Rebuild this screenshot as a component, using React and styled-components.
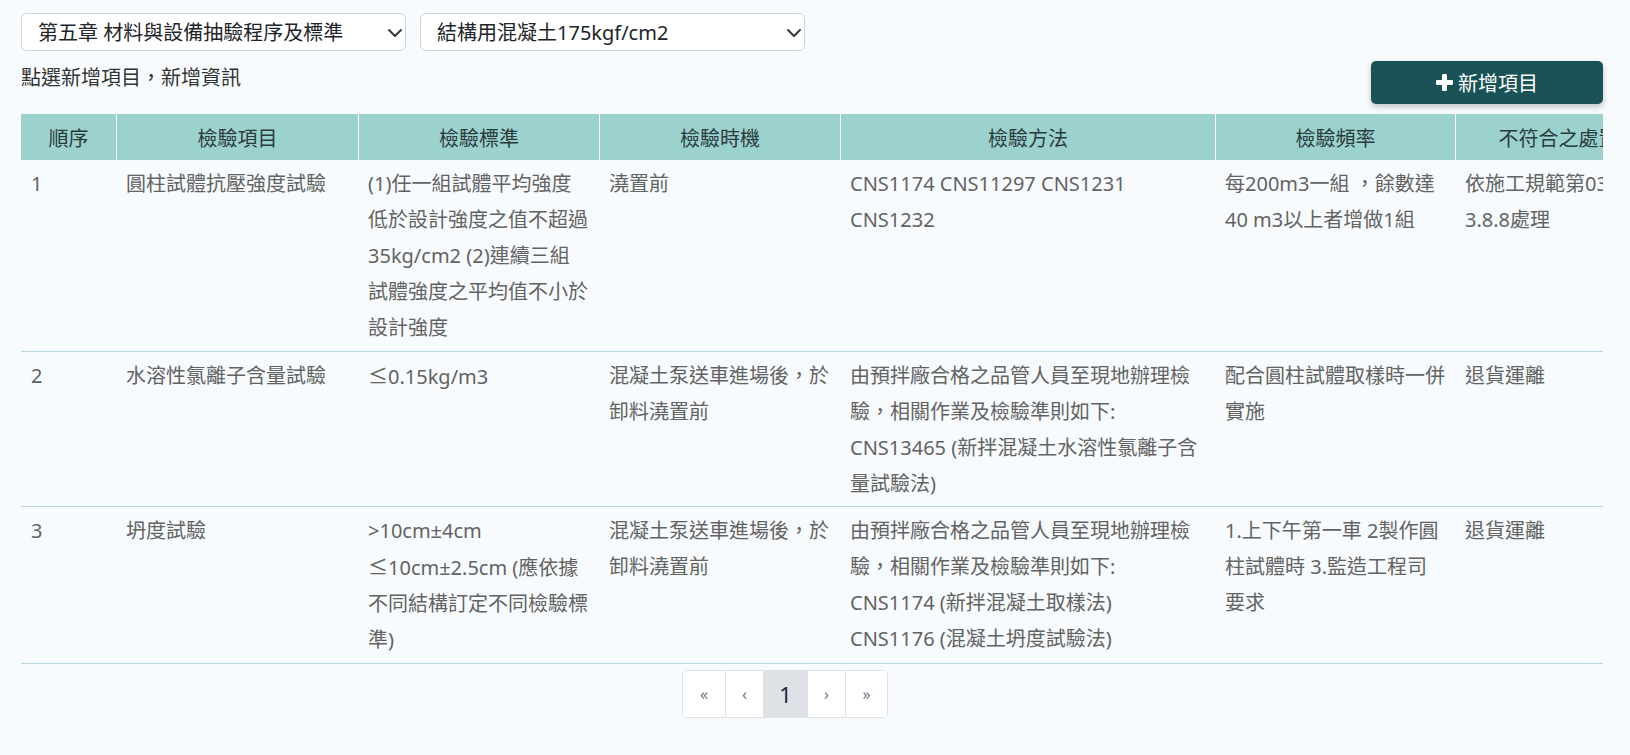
import React from 'react';
import styled, { createGlobalStyle } from 'styled-components';

const GlobalStyle = createGlobalStyle`
  * { box-sizing: border-box; }
  html, body { margin: 0; padding: 0; background: #f7fbfd; }
  body {
    font-family: "Noto Sans", "Noto Sans CJK TC", sans-serif;
  }
`;

const Page = styled.div`
  min-height: 755px;
  padding: 13px 27px 20px 21px;
  background: #f7fbfd;
  color: #333;
  font-size: 20px;
`;

const FilterRow = styled.div`
  display: flex;
  gap: 14px;
`;

const SelectWrap = styled.div`
  position: relative;
  width: 385px;
  height: 38px;
`;

const Select = styled.select`
  appearance: none;
  width: 100%;
  height: 100%;
  padding: 0 40px 0 16px;
  background: #fff;
  border: 1px solid #ced4da;
  border-radius: 6px;
  color: #212529;
  font-family: inherit;
  font-size: 20px;
  outline: none;
`;

const Chevron = styled.svg`
  position: absolute;
  right: 3px;
  top: 14px;
  width: 16px;
  height: 12px;
  pointer-events: none;
`;

const ActionRow = styled.div`
  display: flex;
  justify-content: space-between;
  align-items: flex-start;
  margin-top: 10px;
`;

const InfoText = styled.div`
  padding-top: 2px;
  line-height: 30px;
  color: #333;
`;

const AddButton = styled.button`
  display: flex;
  align-items: center;
  justify-content: center;
  gap: 5px;
  width: 232px;
  height: 43px;
  border: none;
  border-radius: 5px;
  background: #1a5357;
  color: #fff;
  font-family: inherit;
  font-size: 20px;
  box-shadow: 0 3px 6px rgba(0, 0, 0, 0.22);
  cursor: pointer;
`;

const TableWrap = styled.div`
  margin-top: 10px;
  overflow: hidden;
`;

const Table = styled.table`
  table-layout: fixed;
  width: 1640px;
  border-collapse: separate;
  border-spacing: 0;
`;

const Th = styled.th`
  height: 46px;
  padding: 0 6px;
  background: #9bd2ce;
  color: #2b3b3d;
  font-weight: normal;
  font-size: 20px;
  text-align: center;
  white-space: nowrap;
  border-left: ${p => (p.$first ? 'none' : '1px solid #fff')};
`;

const Td = styled.td`
  vertical-align: top;
  padding: 6px 4px 4.5px 10px;
  line-height: 36px;
  color: #636363;
  font-size: 20px;
  white-space: pre;
  overflow: hidden;
  border-bottom: 1px solid #b6d5de;
`;

const Sym = styled.span`
  font-family: "Noto Sans CJK TC", sans-serif;
`;

const PagerRow = styled.div`
  display: flex;
  justify-content: center;
  padding-right: 54px;
  margin-top: 6px;
`;

const Pager = styled.nav`
  display: flex;
  height: 48px;
  background: #fff;
  border: 1px solid #dee2e6;
  border-radius: 5px;
  overflow: hidden;
`;

const PageItem = styled.span`
  display: flex;
  align-items: center;
  justify-content: center;
  width: ${p => p.$w}px;
  border-left: ${p => (p.$first ? 'none' : '1px solid #dee2e6')};
  background: ${p => (p.$active ? '#dee2e6' : '#fff')};
  color: ${p => (p.$active ? '#1e2a3a' : '#6a7788')};
  font-size: ${p => (p.$active ? '22px' : '16px')};
`;

const columns = [
  { key: 'no', label: '順序', width: 95 },
  { key: 'item', label: '檢驗項目', width: 242 },
  { key: 'std', label: '檢驗標準', width: 241 },
  { key: 'timing', label: '檢驗時機', width: 241 },
  { key: 'method', label: '檢驗方法', width: 375 },
  { key: 'freq', label: '檢驗頻率', width: 240 },
  { key: 'handle', label: '不符合之處置', width: 206 },
];

const rows = [
  {
    no: '1',
    item: '圓柱試體抗壓強度試驗',
    std: '(1)任一組試體平均強度\n低於設計強度之值不超過\n35kg/cm2 (2)連續三組\n試體強度之平均值不小於\n設計強度',
    timing: '澆置前',
    method: 'CNS1174 CNS11297 CNS1231\nCNS1232',
    freq: '每200m3一組 ，餘數達\n40 m3以上者增做1組',
    handle: '依施工規範第03310章\n3.8.8處理',
  },
  {
    no: '2',
    item: '水溶性氯離子含量試驗',
    std: '≤0.15kg/m3',
    timing: '混凝土泵送車進場後，於\n卸料澆置前',
    method: '由預拌廠合格之品管人員至現地辦理檢\n驗，相關作業及檢驗準則如下:\nCNS13465 (新拌混凝土水溶性氯離子含\n量試驗法)',
    freq: '配合圓柱試體取樣時一併\n實施',
    handle: '退貨運離',
  },
  {
    no: '3',
    item: '坍度試驗',
    std: '>10cm±4cm\n≤10cm±2.5cm (應依據\n不同結構訂定不同檢驗標\n準)',
    timing: '混凝土泵送車進場後，於\n卸料澆置前',
    method: '由預拌廠合格之品管人員至現地辦理檢\n驗，相關作業及檢驗準則如下:\nCNS1174 (新拌混凝土取樣法)\nCNS1176 (混凝土坍度試驗法)',
    freq: '1.上下午第一車 2製作圓\n柱試體時 3.監造工程司\n要求',
    handle: '退貨運離',
  },
];

function renderText(text) {
  const parts = text.split('≤');
  return parts.map((part, i) => (
    <React.Fragment key={i}>
      {i > 0 && <Sym>≤</Sym>}
      {part}
    </React.Fragment>
  ));
}

function ChevronIcon() {
  return (
    <Chevron viewBox="0 0 16 12">
      <path d="M2 3l6 6 6-6" fill="none" stroke="#343a40" strokeWidth="2" strokeLinecap="round" strokeLinejoin="round" />
    </Chevron>
  );
}

function PlusIcon() {
  return (
    <svg width="17" height="17" viewBox="0 0 17 17">
      <rect x="6" y="0" width="5" height="17" rx="1.2" fill="#fff" />
      <rect x="0" y="6" width="17" height="5" rx="1.2" fill="#fff" />
    </svg>
  );
}

export default function App() {
  return (
    <>
      <GlobalStyle />
      <Page>
        <FilterRow>
          <SelectWrap>
            <Select defaultValue="ch5">
              <option value="ch5">第五章 材料與設備抽驗程序及標準</option>
            </Select>
            <ChevronIcon />
          </SelectWrap>
          <SelectWrap>
            <Select defaultValue="c175">
              <option value="c175">結構用混凝土175kgf/cm2</option>
            </Select>
            <ChevronIcon />
          </SelectWrap>
        </FilterRow>

        <ActionRow>
          <InfoText>點選新增項目，新增資訊</InfoText>
          <AddButton type="button">
            <PlusIcon />
            新增項目
          </AddButton>
        </ActionRow>

        <TableWrap>
          <Table>
            <colgroup>
              {columns.map(c => (
                <col key={c.key} style={{ width: c.width }} />
              ))}
            </colgroup>
            <thead>
              <tr>
                {columns.map((c, i) => (
                  <Th key={c.key} $first={i === 0}>{c.label}</Th>
                ))}
              </tr>
            </thead>
            <tbody>
              {rows.map(r => (
                <tr key={r.no}>
                  {columns.map(c => (
                    <Td key={c.key}>{renderText(r[c.key])}</Td>
                  ))}
                </tr>
              ))}
            </tbody>
          </Table>
        </TableWrap>

        <PagerRow>
          <Pager>
            <PageItem $w={42} $first>«</PageItem>
            <PageItem $w={38}>‹</PageItem>
            <PageItem $w={44} $active>1</PageItem>
            <PageItem $w={38}>›</PageItem>
            <PageItem $w={42}>»</PageItem>
          </Pager>
        </PagerRow>
      </Page>
    </>
  );
}
